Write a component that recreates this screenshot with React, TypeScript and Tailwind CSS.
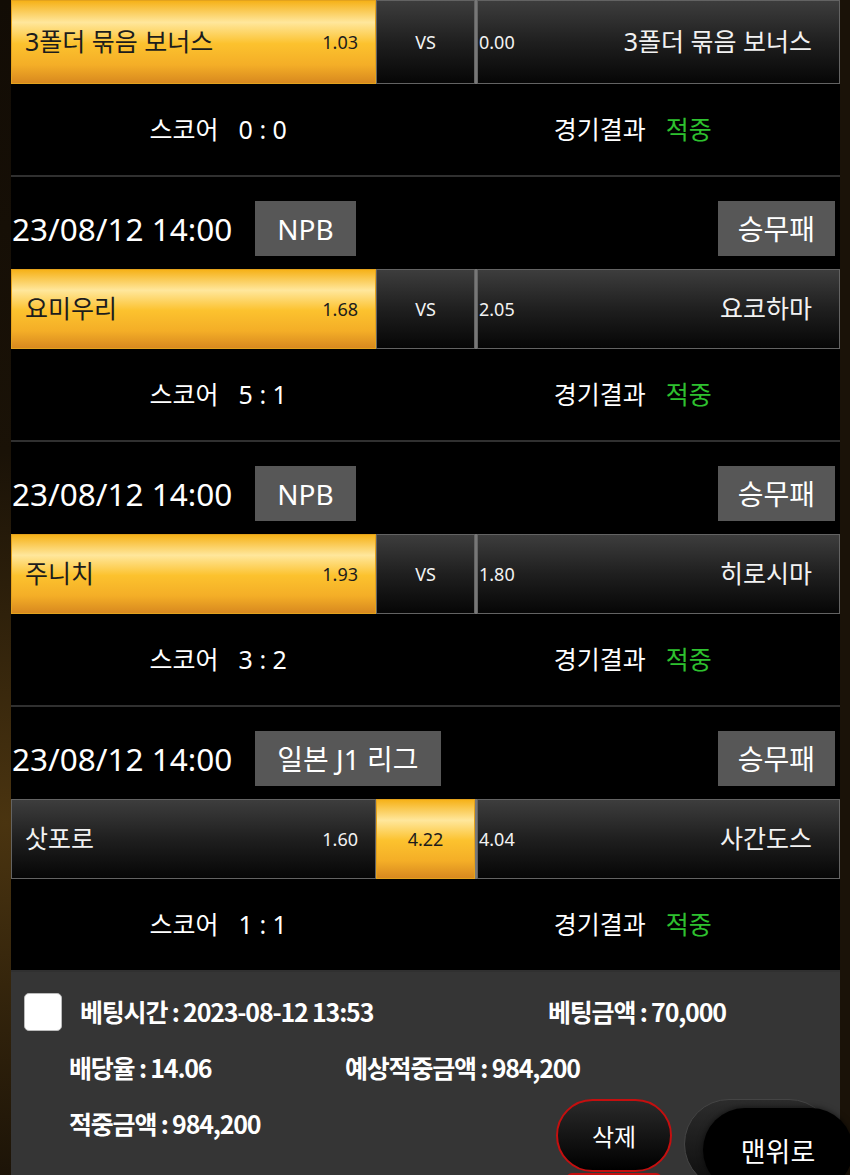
import React from "react";

type Pick = "home" | "draw" | "away";

type Game = {
  date?: string;
  league?: string;
  kind?: string;
  home: string;
  homeOdds: string;
  draw: string;
  awayOdds: string;
  away: string;
  pick: Pick;
  score: string;
};

const games: Game[] = [
  {
    home: "3폴더 묶음 보너스",
    homeOdds: "1.03",
    draw: "VS",
    awayOdds: "0.00",
    away: "3폴더 묶음 보너스",
    pick: "home",
    score: "0 : 0",
  },
  {
    date: "23/08/12 14:00",
    league: "NPB",
    kind: "승무패",
    home: "요미우리",
    homeOdds: "1.68",
    draw: "VS",
    awayOdds: "2.05",
    away: "요코하마",
    pick: "home",
    score: "5 : 1",
  },
  {
    date: "23/08/12 14:00",
    league: "NPB",
    kind: "승무패",
    home: "주니치",
    homeOdds: "1.93",
    draw: "VS",
    awayOdds: "1.80",
    away: "히로시마",
    pick: "home",
    score: "3 : 2",
  },
  {
    date: "23/08/12 14:00",
    league: "일본 J1 리그",
    kind: "승무패",
    home: "삿포로",
    homeOdds: "1.60",
    draw: "4.22",
    awayOdds: "4.04",
    away: "사간도스",
    pick: "draw",
    score: "1 : 1",
  },
];

const gold =
  "bg-[linear-gradient(180deg,#f6b219_0%,#ffe79c_26%,#fcc22e_52%,#f4ae27_78%,#d8891f_100%)] border border-[#e3a21d] text-[#1c1c1c]";
const dark =
  "bg-[linear-gradient(180deg,#3d3d3d_0%,#1f1f1f_50%,#060606_100%)] border border-[#636363] text-[#f2f2f2]";

function OddsRow({ g, first }: { g: Game; first?: boolean }) {
  return (
    <div className={`flex ${first ? "h-[84px]" : "h-[80px]"}`}>
      <div className={`w-[365px] flex items-center justify-between pl-[13px] pr-[17px] ${g.pick === "home" ? gold : dark}`}>
        <span className="text-[25px]">{g.home}</span>
        <span className="text-[18px]">{g.homeOdds}</span>
      </div>
      <div className={`w-[99px] flex items-center justify-center text-[18px] ${g.pick === "draw" ? gold : dark}`}>
        {g.draw}
      </div>
      <div className="w-[2px] bg-[#777]" />
      <div className={`flex-1 flex items-center justify-between pl-[1px] pr-[27px] ${g.pick === "away" ? gold : dark}`}>
        <span className="text-[18px]">{g.awayOdds}</span>
        <span className="text-[25px]">{g.away}</span>
      </div>
    </div>
  );
}

function GameBlock({ g, first }: { g: Game; first?: boolean }) {
  return (
    <div>
      {g.date && (
        <div className="h-[92px] pt-[11px] flex items-center">
          <span className="ml-[1px] text-[31.5px] text-white">{g.date}</span>
          <span className="ml-[23px] h-[55px] px-[22px] flex items-center bg-[#575757] text-white text-[28px]">
            {g.league}
          </span>
          <span className="ml-auto mr-[5px] h-[55px] px-[20px] flex items-center bg-[#575757] text-white text-[28px]">
            {g.kind}
          </span>
        </div>
      )}
      <OddsRow g={g} first={first} />
      <div className="h-[91px] grid grid-cols-2 items-center text-[25px] text-white">
        <div className="flex justify-center">
          <span>스코어</span>
          <span className="ml-[20px]">{g.score}</span>
        </div>
        <div className="flex justify-center">
          <span>경기결과</span>
          <span className="ml-[20px] text-[#2ec12f]">적중</span>
        </div>
      </div>
      <div className="h-[2px] bg-[#303030]" />
    </div>
  );
}

export default function App() {
  return (
    <div className="h-[1175px] w-[850px] overflow-hidden flex bg-[#150e06] font-['Noto_Sans','Noto_Sans_CJK_KR',sans-serif]">
      {/* sparkle strip */}
      <div className="w-[11px] bg-[radial-gradient(circle_at_50%_70%,#4a3410_0%,#1a1207_45%,#120c05_100%)]" />

      <div className="w-[829px] bg-black flex flex-col">
        {games.map((g, i) => (
          <GameBlock key={i} g={g} first={i === 0} />
        ))}

        {/* bet summary */}
        <div className="relative flex-1 bg-[#353535] text-white font-['Noto_Sans_CJK_KR',sans-serif] font-bold text-[25px] tracking-[-1.2px]">
          <div className="mt-[21px] h-[38px] flex items-center pl-[13px]">
            <span className="w-[38px] h-[38px] rounded-[5px] bg-white border border-[#bbb]" />
            <span className="ml-[18px] w-[468px]">베팅시간 : 2023-08-12 13:53</span>
            <span>베팅금액 : 70,000</span>
          </div>
          <div className="mt-[18px] h-[38px] flex items-center pl-[58px]">
            <span className="w-[276px]">배당율 : 14.06</span>
            <span>예상적중금액 : 984,200</span>
          </div>
          <div className="mt-[12px] flex items-start pl-[58px]">
            <span className="pt-[6px] w-[487px]">적중금액 : 984,200</span>
            <div className="flex flex-col items-center">
              <button className="w-[116px] h-[73px] rounded-full border-2 border-[#c40f0f] bg-[linear-gradient(180deg,#2a2a2a_0%,#000_100%)] text-white text-[24px] font-normal tracking-normal">
                삭제
              </button>
              <div className="mt-[1px] w-[96px] h-[6px] rounded-t-full border-t-2 border-[#c40f0f]" />
            </div>
            <button className="ml-[12px] w-[150px] h-[90px] rounded-full border border-[#444] bg-[linear-gradient(180deg,#2c2c2c_0%,#0c0c0c_100%)]" />
          </div>

          {/* floating scroll-to-top */}
          <button className="absolute left-[692px] top-[136px] w-[150px] h-[84px] rounded-full bg-black shadow-[0_0_6px_rgba(0,0,0,0.6)] flex items-start justify-center pt-[23px] text-[27px] font-normal tracking-normal text-white">
            맨위로
          </button>
        </div>
      </div>

      <div className="w-[10px] bg-[#1a1208]" />
    </div>
  );
}
